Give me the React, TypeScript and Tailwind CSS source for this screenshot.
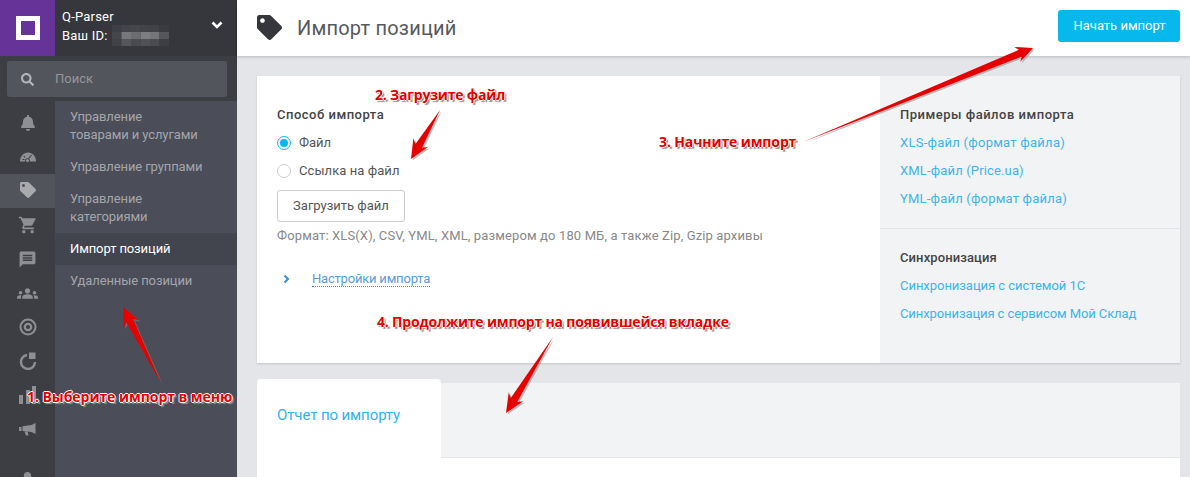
import { FaBell, FaTag, FaSearch, FaUser } from "react-icons/fa";
import { MdShoppingCart, MdMessage, MdGroups } from "react-icons/md";
import type { ReactNode } from "react";

const menu = [
  { label: ["Управление", "товарами и услугами"], h: "h-[50px]" },
  { label: ["Управление группами"], h: "h-[32px]" },
  { label: ["Управление", "категориями"], h: "h-[44px]" },
];

function Gauge() {
  return (
    <svg width="16" height="11" viewBox="0 0 16 11" fill="currentColor" stroke="none">
      <path d="M0 9.5C0 4 3.5 .5 8 .5s8 3.5 8 9H0z" />
      <path d="M7.5 8 11.5 3M2.5 7.5h2M3.8 4.2l1.3 1.2" stroke="#3d3e44" strokeWidth="1.1" fill="none" />
      <circle cx="7.5" cy="8.6" r="2" stroke="#3d3e44" />
    </svg>
  );
}

function Target() {
  return (
    <svg width="18" height="18" viewBox="0 0 18 18" fill="none" stroke="currentColor">
      <circle cx="9" cy="9" r="7.5" strokeWidth="2" />
      <circle cx="9" cy="9" r="3.2" strokeWidth="2.2" />
    </svg>
  );
}

function Refresh() {
  return (
    <svg width="18" height="18" viewBox="0 0 18 18" fill="none" stroke="currentColor">
      <path d="M16 10a7 7 0 1 1-8-7" strokeWidth="2.4" />
      <path d="M10 0.5h6.5V7H10z" fill="currentColor" stroke="none" />
    </svg>
  );
}

function Bars() {
  return (
    <svg width="18" height="18" viewBox="0 0 18 18" fill="currentColor">
      <rect x="0" y="9" width="4" height="9" />
      <rect x="7" y="4" width="4" height="14" />
      <rect x="13" y="0" width="4" height="18" />
    </svg>
  );
}

function Megaphone() {
  return (
    <svg width="17" height="13" viewBox="0 0 17 13" fill="currentColor">
      <path d="M0 4h2.5v4H0zM3.5 3.2 12.5 2 16.5 0v11l-4-2-9-1z" />
      <path d="M5.5 8.5h3l1 4H7z" />
    </svg>
  );
}

function Pixelated() {
  const rows = [
    ["#3e3f44", "#44454a", "#46474c", "#424348", "#414247", "#3b3c41"],
    ["#45464b", "#77787c", "#6c6d71", "#7d7e80", "#747579", "#55565a"],
    ["#414247", "#55565a", "#4a4b50", "#505155", "#4b4c50", "#3d3e43"],
  ];
  return (
    <svg width="57" height="21" className="ml-[4px]">
      {rows.map((row, y) =>
        row.map((fill, x) => <rect key={`${x}-${y}`} x={x * 9.5} y={y * 7} width="9.5" height="7" fill={fill} />)
      )}
    </svg>
  );
}

function arrowPoints(x1: number, y1: number, x2: number, y2: number, head: number, wing: number, shaft: number) {
  const len = Math.hypot(x2 - x1, y2 - y1);
  const ux = (x2 - x1) / len;
  const uy = (y2 - y1) / len;
  const nx = -uy;
  const ny = ux;
  const at = (d: number, s: number) => `${x2 - ux * d + nx * s},${y2 - uy * d + ny * s}`;
  return [
    `${x1},${y1}`,
    at(head * 0.8, shaft),
    at(head, wing),
    `${x2},${y2}`,
    at(head, -wing),
    at(head * 0.8, -shaft),
  ].join(" ");
}

function Arrow(props: { from: [number, number]; to: [number, number]; head?: number; wing?: number; shaft?: number }) {
  const { from, to, head = 19, wing = 8.5, shaft = 3.8 } = props;
  const points = arrowPoints(from[0], from[1], to[0], to[1], head, wing, shaft);
  return (
    <>
      <polygon points={points} fill="#8a8a8a" opacity="0.55" transform="translate(1.5 1.5)" />
      <polygon points={points} fill="#e60000" />
    </>
  );
}

function Note({ className, children }: { className: string; children: ReactNode }) {
  return (
    <div
      className={`absolute whitespace-nowrap font-['Open_Sans',sans-serif] text-[14px] leading-[20px] font-bold text-[#e30000] [text-shadow:1px_0_0_#fff,-1px_0_0_#fff,0_1px_0_#fff,0_-1px_0_#fff,1px_1px_1px_#777,2px_2px_1px_#999] ${className}`}
    >
      {children}
    </div>
  );
}

function SideIcon({ children, active }: { children: ReactNode; active?: boolean }) {
  return (
    <div className={`flex h-[34px] w-[55px] items-center justify-center ${active ? "bg-[#52545c] text-[#a9aaad]" : "text-[#8e8f94]"}`}>
      {children}
    </div>
  );
}

export default function App() {
  return (
    <div className="relative flex h-[477px] w-[1190px] overflow-hidden bg-[#e4e5e9] font-['Roboto',sans-serif] text-[13px] text-[#555]">
      <aside className="flex w-[237px] shrink-0 flex-col bg-[#3d3e44]">
        <div className="flex h-14 shrink-0 bg-[#36373c]">
          <div className="flex w-[55px] items-center justify-center bg-[#663399]">
            <div className="h-6 w-6 border-[5px] border-white" />
          </div>
          <div className="flex-1 pt-[8px] pl-[7px] text-[13px] leading-[17px] tracking-[0.2px] text-white">
            <div>Q-Parser</div>
            <div className="flex items-center">
              Ваш ID:
              <Pixelated />
            </div>
          </div>
          <svg width="12" height="8" viewBox="0 0 12 8" className="mt-[21px] mr-[14px] text-white" fill="none" stroke="currentColor" strokeWidth="2.6">
            <path d="M1.5 1.5 6 6l4.5-4.5" />
          </svg>
        </div>
        <div className="mt-[5px] mr-[10px] ml-[7px] flex h-9 shrink-0 items-center rounded-[3px] bg-[#53555c] text-[#93959a]">
          <FaSearch className="ml-[14px] h-[13px] w-[13px] text-[#b4b5b8]" />
          <span className="ml-[21px]">Поиск</span>
        </div>
        <div className="mt-1 flex flex-1">
          <div className="flex w-[55px] shrink-0 flex-col pt-[5px]">
            <SideIcon><FaBell size={16} /></SideIcon>
            <SideIcon><Gauge /></SideIcon>
            <SideIcon active><FaTag size={16} className="-translate-y-px" /></SideIcon>
            <SideIcon><MdShoppingCart size={20} /></SideIcon>
            <SideIcon><MdMessage size={19} /></SideIcon>
            <SideIcon><MdGroups size={21} /></SideIcon>
            <SideIcon><Target /></SideIcon>
            <SideIcon><Refresh /></SideIcon>
            <SideIcon><Bars /></SideIcon>
            <SideIcon><Megaphone /></SideIcon>
            <div className="flex w-[55px] justify-center pt-[26px] text-[#8e8f94]"><FaUser size={15} /></div>
          </div>
          <nav className="flex-1 bg-[#4b4d58] pt-[6px] leading-[18px] tracking-[-0.1px] text-[#a4a6ab]">
            {menu.map((item) => (
              <div key={item.label[0] + item.label.length + item.h} className={`${item.h} px-[15px] pt-[1px]`}>
                {item.label.map((line) => (
                  <div key={line}>{line}</div>
                ))}
              </div>
            ))}
            <div className="flex h-[32px] items-center bg-[#43454e] px-[15px] text-white">Импорт позиций</div>
            <div className="flex h-[32px] items-center px-[15px]">Удаленные позиции</div>
          </nav>
        </div>
      </aside>

      <main className="flex min-w-0 flex-1 flex-col">
        <header className="flex h-14 shrink-0 items-center justify-between bg-white pr-[10px] pl-[20px] shadow-[0_1px_3px_rgba(0,0,0,0.2)]">
          <div className="flex items-center">
            <FaTag size={25} className="-translate-y-[1px] text-[#36373c]" />
            <h1 className="ml-[15px] text-[20px] leading-none tracking-[0.2px] text-[#555a60]">Импорт позиций</h1>
          </div>
          <button className="-mt-[5px] h-8 w-[122px] rounded-[3px] bg-[#07b8ec] pl-[1px] text-white">Начать импорт</button>
        </header>

        <section className="mt-5 mr-[10px] ml-5 flex h-[287px] shrink-0 bg-white shadow-[0_1px_2px_rgba(0,0,0,0.15)]">
          <div className="flex-1 pt-[30px] pl-5">
            <div className="font-medium leading-[18px] tracking-[0.5px] text-[#444]">Способ импорта</div>
            <label className="mt-[10px] flex h-[18px] items-center">
              <span className="flex h-[14px] w-[14px] items-center justify-center rounded-full border border-[#07b8ec]">
                <span className="h-2 w-2 rounded-full bg-[#07b8ec]" />
              </span>
              <span className="ml-2">Файл</span>
            </label>
            <label className="mt-[10px] flex h-[18px] items-center">
              <span className="h-[14px] w-[14px] rounded-full border border-[#ccc]" />
              <span className="ml-2 tracking-[0.07px]">Ссылка на файл</span>
            </label>
            <button className="mt-[10px] h-8 w-[128px] rounded-[3px] border border-[#ccc] bg-white text-[#555]">Загрузить файл</button>
            <p className="mt-[5px] leading-[18px] tracking-[0.13px] text-[#888]">Формат: XLS(X), CSV, YML, XML, размером до 180 МБ, а также Zip, Gzip архивы</p>
            <div className="mt-[26px] flex items-center">
              <svg width="8" height="10" viewBox="0 0 8 10" fill="none" stroke="#3c8fd0" strokeWidth="2" className="ml-[6px]">
                <path d="M1.5 1.5 5 5 1.5 8.5" />
              </svg>
              <span className="ml-[21px] border-b border-dotted border-[#3c8fd0] leading-[15px] tracking-[-0.2px] text-[#5b9bd5]">Настройки импорта</span>
            </div>
          </div>
          <div className="flex w-[300px] shrink-0 flex-col bg-[#f2f3f5] text-[#3db5e6]">
            <div className="h-[153px] border-b border-[#e4e5e9] px-5 pt-[30px]">
              <div className="font-medium leading-[18px] tracking-[0.5px] text-[#444]">Примеры файлов импорта</div>
              <div className="mt-[10px] leading-[18px] tracking-[0.26px]">XLS-файл (формат файла)</div>
              <div className="mt-[10px] leading-[18px] tracking-[0.15px]">XML-файл (Price.ua)</div>
              <div className="mt-[10px] leading-[18px] tracking-[0.2px]">YML-файл (формат файла)</div>
            </div>
            <div className="px-5 pt-5">
              <div className="font-medium leading-[18px] tracking-[0.1px] text-[#444]">Синхронизация</div>
              <div className="mt-[10px] leading-[18px] tracking-[-0.04px]">Синхронизация с системой 1С</div>
              <div className="mt-[10px] leading-[18px] tracking-[-0.09px]">Синхронизация с сервисом Мой Склад</div>
            </div>
          </div>
        </section>

        <section className="mt-4 mr-[10px] ml-5 flex-1 bg-white">
          <div className="flex h-[79px] bg-[#e4e5e9]">
            <div className="flex w-[184px] items-center rounded-t-[4px] bg-white pb-[7px] pl-5 text-[15px] tracking-[-0.1px] text-[#2fb4e8]">Отчет по импорту</div>
            <div className="mt-1 flex-1 border-b border-[#e4e5e9] bg-[#f2f3f5]" />
          </div>
        </section>
      </main>

      <svg className="pointer-events-none absolute inset-0" width="1190" height="477">
        <Arrow from={[161, 383]} to={[123, 307]} />
        <Arrow from={[440, 110]} to={[411, 159]} />
        <Arrow from={[803, 142]} to={[1033, 48]} head={17} wing={8} shaft={3.6} />
        <Arrow from={[553, 337]} to={[506, 413]} />
      </svg>
      <Note className="top-[387px] left-[27px] tracking-[-0.05px]">1. Выберите импорт в меню</Note>
      <Note className="top-[85px] left-[375px] tracking-[-0.18px]">2. Загрузите файл</Note>
      <Note className="top-[132px] left-[659px] tracking-[-0.12px]">3. Начните импорт</Note>
      <Note className="top-[312px] left-[377px] tracking-[-0.19px]">4. Продолжите импорт на появившейся вкладке</Note>
    </div>
  );
}
